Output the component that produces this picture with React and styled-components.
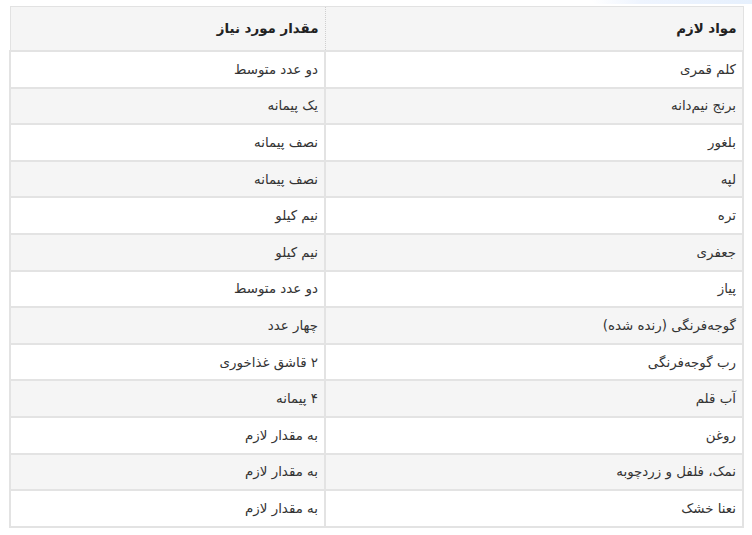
import React from "react"
import styled, { createGlobalStyle } from "styled-components"

const GlobalStyle = createGlobalStyle`
  html, body {
    margin: 0;
    padding: 0;
    background: #ffffff;
  }
  body {
    font-family: "DejaVu Sans", "Noto Sans", sans-serif;
    color: #333;
  }
`

const Page = styled.div`
  padding: 0 8px 0 9px;
  direction: rtl;
`

const Glow = styled.div`
  height: 4px;
  width: 160px;
  margin-right: -8px;
  background: linear-gradient(to left, #e6f0fd 0%, #eef4fe 70%, rgba(240, 246, 255, 0) 100%);
  border-bottom-left-radius: 8px;
  margin-bottom: 2px;
`

const Table = styled.table`
  width: 735px;
  border-collapse: collapse;
  table-layout: fixed;
  direction: rtl;
  font-size: 13.4px;
  border: 1px solid #e2e2e2;
`

const HeadCell = styled.th`
  background: #f5f5f5;
  border: 1px dotted #cfcfcf;
  height: 43px;
  padding: 0 6px;
  text-align: right;
  font-weight: bold;
  color: #222;
  width: ${p => p.$width || "auto"};
`

const Row = styled.tr`
  background: ${p => (p.$shaded ? "#f5f5f5" : "#ffffff")};
`

const Cell = styled.td`
  border: 2px solid #e3e3e3;
  height: 34.6px;
  padding: 0 6px;
  text-align: right;
  color: #333;
`

const rows = [
  ["کلم قمری", "دو عدد متوسط"],
  ["برنج نیم‌دانه", "یک پیمانه"],
  ["بلغور", "نصف پیمانه"],
  ["لپه", "نصف پیمانه"],
  ["تره", "نیم کیلو"],
  ["جعفری", "نیم کیلو"],
  ["پیاز", "دو عدد متوسط"],
  ["گوجه‌فرنگی (رنده شده)", "چهار عدد"],
  ["رب گوجه‌فرنگی", "۲ قاشق غذاخوری"],
  ["آب قلم", "۴ پیمانه"],
  ["روغن", "به مقدار لازم"],
  ["نمک، فلفل و زردچوبه", "به مقدار لازم"],
  ["نعنا خشک", "به مقدار لازم"],
]

export default function App() {
  return (
    <>
      <GlobalStyle />
      <Page>
        <Glow />
        <Table>
          <thead>
            <tr>
              <HeadCell $width="405px">مواد لازم</HeadCell>
              <HeadCell>مقدار مورد نیاز</HeadCell>
            </tr>
          </thead>
          <tbody>
            {rows.map(([item, amount], i) => (
              <Row key={item} $shaded={i % 2 === 1}>
                <Cell>{item}</Cell>
                <Cell>{amount}</Cell>
              </Row>
            ))}
          </tbody>
        </Table>
      </Page>
    </>
  )
}
